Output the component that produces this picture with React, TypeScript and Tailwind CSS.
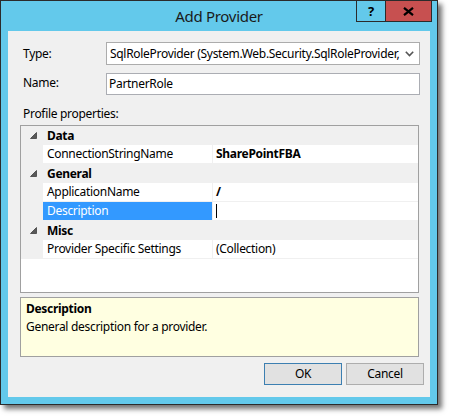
import React from "react";

const font = { fontFamily: '"Noto Sans", "Open Sans", sans-serif' };

function Tri() {
  return (
    <svg width="7" height="7" viewBox="0 0 7 7" className="block">
      <polygon points="6.5,0.5 6.5,6.5 0.5,6.5" fill="#595959" stroke="#404040" strokeWidth="0.8" />
    </svg>
  );
}

function CategoryRow({ label }: { label: string }) {
  return (
    <div className="flex h-[19px] items-center bg-[#f0f0f0]">
      <div className="flex w-[22px] shrink-0 justify-center pl-[2px]">
        <Tri />
      </div>
      <div className="pl-[4px] font-bold leading-none">{label}</div>
    </div>
  );
}

function PropRow({
  name,
  value,
  bold,
  selected,
  cursor,
}: {
  name: string;
  value?: string;
  bold?: boolean;
  selected?: boolean;
  cursor?: boolean;
}) {
  return (
    <div className="flex h-[19px]">
      <div className="w-[22px] shrink-0 bg-[#f0f0f0]" />
      <div className="flex w-[169px] shrink-0 flex-col">
        <div
          className={
            selected
              ? "flex h-[18px] items-center bg-[#3399ff] pl-[4px] text-white"
              : "flex h-[18px] items-center bg-white pl-[4px]"
          }
        >
          {name}
        </div>
        <div className="h-[1px] bg-[#f0f0f0]" />
      </div>
      <div className="w-[1px] shrink-0 bg-[#f0f0f0]" />
      <div className="flex flex-1 flex-col">
        <div className={bold ? "flex h-[18px] items-center bg-white pl-[3px] font-bold" : "flex h-[18px] items-center bg-white pl-[3px]"}>
          {cursor ? <div className="h-[14px] w-[1px] bg-black" /> : value}
        </div>
        <div className="h-[1px] bg-[#f0f0f0]" />
      </div>
    </div>
  );
}

export default function App() {
  return (
    <div className="h-[420px] w-[453px] bg-white text-[12px] tracking-[-0.3px] text-black" style={font}>
      <div className="relative flex h-[405px] w-[438px] flex-col border border-[#2b2b2b] bg-[#63c9eb] shadow-[4px_4px_5px_rgba(0,0,0,0.55)]">
        {/* title bar */}
        <div className="flex h-[30px] shrink-0 items-center justify-center text-[15px] text-[#1a1a1a]">
          Add Provider
        </div>
        <div className="absolute right-[5px] top-[-1px] flex h-[22px]">
          <div className="flex w-[30px] items-center justify-center border border-[#2b2b2b] text-[13px] font-bold leading-none">
            ?
          </div>
          <div className="flex w-[46px] items-center justify-center border border-l-0 border-[#2b2b2b] bg-[#c75050]">
            <svg width="11" height="9" viewBox="0 0 11 9">
              <path d="M1 0.8 L10 8.2 M10 0.8 L1 8.2" stroke="#000" strokeWidth="2.2" />
            </svg>
          </div>
        </div>
        {/* client */}
        <div className="mx-[7px] flex h-[366px] flex-col bg-[#f0f0f0]">
          <div className="mt-[11px] flex items-center">
            <div className="w-[98px] pl-[15px]">Type:</div>
            <div className="flex h-[23px] w-[314px] items-center justify-between overflow-hidden border border-[#acacac] bg-white pl-[3px] pr-[5px]">
              <span className="whitespace-nowrap">SqlRoleProvider (System.Web.Security.SqlRoleProvider,</span>
              <svg width="9" height="6" viewBox="0 0 9 6" className="ml-[4px] shrink-0">
                <path d="M0.8 0.8 L4.5 4.5 L8.2 0.8" fill="none" stroke="#555" strokeWidth="1.6" />
              </svg>
            </div>
          </div>
          <div className="mt-[8px] flex items-center">
            <div className="w-[98px] pb-[3px] pl-[15px]">Name:</div>
            <div className="flex h-[22px] w-[314px] items-center border border-[#abadb3] bg-white pl-[2px]">
              PartnerRole
            </div>
          </div>
          <div className="mt-[8px] flex h-[22px] items-center pl-[15px]">Profile properties:</div>
          <div className="ml-[12px] flex h-[168px] w-[399px] flex-col border border-[#a0a0a0] bg-white">
            <CategoryRow label="Data" />
            <PropRow name="ConnectionStringName" value="SharePointFBA" bold />
            <CategoryRow label="General" />
            <PropRow name="ApplicationName" value="/" bold />
            <PropRow name="Description" selected cursor />
            <CategoryRow label="Misc" />
            <PropRow name="Provider Specific Settings" value="(Collection)" />
          </div>
          <div className="ml-[12px] mt-[4px] flex h-[60px] w-[399px] flex-col border border-[#a0a0a0] bg-[#ffffe1] px-[5px] pt-[2px]">
            <div className="h-[18px] font-bold">Description</div>
            <div className="h-[18px]">General description for a provider.</div>
          </div>
          <div className="mr-[6px] mt-[6px] flex justify-end gap-[4px]">
            <div className="flex h-[22px] w-[78px] items-center justify-center border border-[#3c7fb1] bg-[#e1e1e1]">OK</div>
            <div className="flex h-[22px] w-[78px] items-center justify-center border border-[#adadad] bg-[#e1e1e1]">Cancel</div>
          </div>
        </div>
      </div>
    </div>
  );
}
